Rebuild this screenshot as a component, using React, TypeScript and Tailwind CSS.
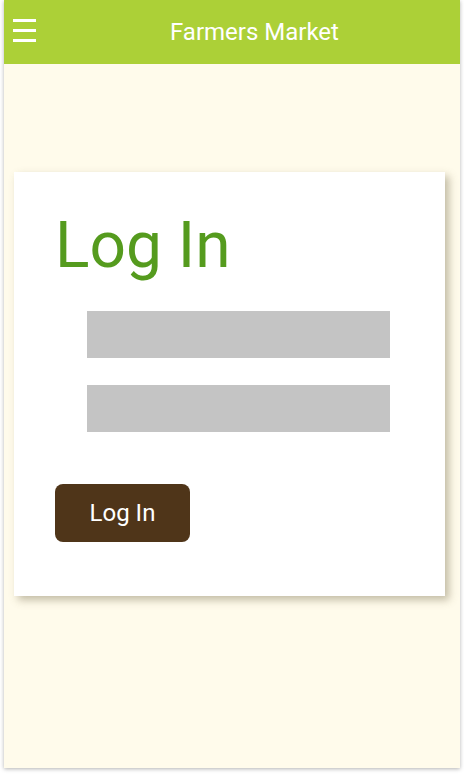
export default function App() {
  return (
    <div className="w-[464px] h-[776px] bg-white" style={{ fontFamily: 'Roboto, "Liberation Sans", sans-serif' }}>
      <div className="ml-[4px] w-[456px] h-[768px] bg-[#fffbeb] shadow-[0_1px_4px_rgba(0,0,0,0.3)] flex flex-col">
        {/* Header */}
        <div className="h-16 bg-[#acd037] flex items-start">
          <div className="ml-[9px] mt-[19px] w-[23px] flex flex-col gap-[7px]">
            <div className="h-[3px] bg-white"></div>
            <div className="h-[3px] bg-white"></div>
            <div className="h-[3px] bg-white"></div>
          </div>
          <div className="ml-[134px] mt-[18px] text-white text-[24px] leading-[28px]">Farmers Market</div>
        </div>

        {/* Card */}
        <div className="mt-[108px] ml-[10px] w-[431px] h-[424px] bg-white shadow-[4px_4px_8px_rgba(120,110,80,0.45)] pt-[36px] pl-[41px]">
          <h1 className="text-[64px] leading-[75px] text-[#559b1e]">Log In</h1>
          <div className="mt-[28px] ml-[32px] flex flex-col gap-[27px]">
            <div className="w-[303px] h-[47px] bg-[#c4c4c4]"></div>
            <div className="w-[303px] h-[47px] bg-[#c4c4c4]"></div>
          </div>
          <button className="mt-[52px] w-[135px] h-[58px] rounded-lg bg-[#4f3519] text-white text-[24px] leading-none flex items-center justify-center">
            Log In
          </button>
        </div>
      </div>
    </div>
  );
}
